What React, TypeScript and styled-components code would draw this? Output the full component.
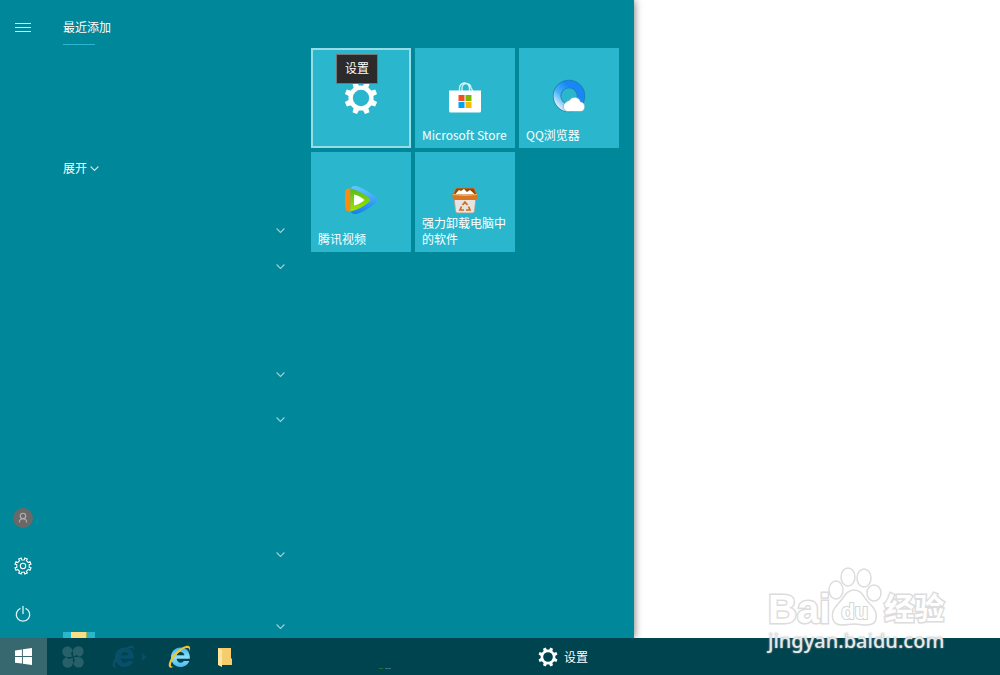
import React from "react";
import styled, { createGlobalStyle, css } from "styled-components";

const teal = "#008799";
const tileColor = "#2ab7cd";
const barColor = "#00444f";

const GlobalStyle = createGlobalStyle`
  * { box-sizing: border-box; }
  body {
    margin: 0;
    background: #fff;
    color: #fff;
    font: 12px/16px "Noto Sans CJK SC", "Open Sans", sans-serif;
  }
  button { font: inherit; color: inherit; border: 0; padding: 0; background: none; cursor: pointer; }
  svg { display: block; flex: none; overflow: visible; }
`;

const Desktop = styled.div`
  min-height: 100vh;
  display: flex;
  flex-direction: column;
  position: relative;
`;

const Workspace = styled.main`
  flex: 1 1 0;
  min-height: 0;
  display: flex;
  overflow: hidden;
`;

const StartMenu = styled.section`
  flex: 0 1 634px;
  display: flex;
  background: ${teal};
  box-shadow: 0 0 8px rgba(0, 0, 0, 0.6);
`;

const Rail = styled.nav`
  flex: none;
  width: 46px;
  display: flex;
  flex-direction: column;
  justify-content: space-between;
  padding-top: 3px;
`;

const RailGroup = styled.div`
  display: flex;
  flex-direction: column;
`;

const RailButton = styled.button`
  height: 48px;
  display: grid;
  place-items: center;
`;

const AppList = styled.div`
  flex: none;
  width: 248px;
  padding-left: 17px;
  display: flex;
  flex-direction: column;
  overflow: hidden;
`;

const ListHeading = styled.h2`
  margin: 0;
  height: 45px;
  padding-top: 19px;
  font-size: 12px;
  line-height: 16px;
  font-weight: 400;
  display: flex;
  flex-direction: column;
  justify-content: space-between;
  &::after {
    content: "";
    width: 32px;
    height: 1px;
    background: ${tileColor};
  }
`;

const ExpandButton = styled.button`
  align-self: flex-start;
  margin-top: 105px;
  height: 36px;
  display: flex;
  align-items: center;
  gap: 3px;
`;

const Groups = styled.div`
  flex: 1 1 0;
  min-height: 0;
  overflow: hidden;
  padding-top: 26px;
`;

const Group = styled.div<{ $gap: number }>`
  margin-bottom: ${(p) => p.$gap}px;
`;

const AppRow = styled.div`
  height: 36px;
  display: flex;
  align-items: center;
  justify-content: flex-end;
  padding-right: 9px;
`;

const RowToggle = styled.button`
  display: grid;
  place-items: center;
`;

const NextApp = styled.div`
  width: 32px;
  height: 6px;
  display: flex;
  justify-content: center;
  background: ${tileColor};
`;

const Tiles = styled.div`
  display: grid;
  grid-template-columns: repeat(3, 100px);
  grid-auto-rows: 100px;
  gap: 4px;
  padding: 48px 0 0 17px;
  align-content: start;
`;

const TileButton = styled.button<{ $selected?: boolean }>`
  position: relative;
  background: ${tileColor};
  text-align: left;
  ${(p) => p.$selected && css`box-shadow: inset 0 0 0 2px #98dce7;`}
`;

const TileIcon = styled.span<{ $raised?: boolean }>`
  position: absolute;
  inset: 0;
  padding-bottom: ${(p) => (p.$raised ? 4 : 0)}px;
  display: grid;
  place-items: center;
`;

const TileLabel = styled.span`
  position: absolute;
  left: 7px;
  right: 4px;
  bottom: 5px;
`;

const Tooltip = styled.span`
  position: absolute;
  left: 25px;
  top: 6px;
  padding: 5px 8px 7px;
  border: 1px solid #767676;
  background: #2b2b2b;
`;

const Taskbar = styled.footer`
  flex: none;
  height: 37px;
  display: flex;
  background: ${barColor};
`;

const TaskButton = styled.button<{ $width: number; $active?: boolean }>`
  width: ${(p) => p.$width}px;
  display: grid;
  place-items: center;
  background: ${(p) => (p.$active ? "#38686f" : "transparent")};
`;

const TaskGap = styled.div`
  width: 283px;
  display: flex;
  align-items: flex-end;
  justify-content: center;
  padding: 0 16px 5px 0;
`;

const RunningTask = styled.button`
  display: flex;
  align-items: center;
  gap: 6px;
  padding: 0 4px;
`;

const Watermark = styled.div`
  position: absolute;
  right: 52px;
  bottom: 21px;
  width: 180px;
  color: #fff;
  pointer-events: none;
`;

const WatermarkLogo = styled.div`
  display: flex;
  align-items: flex-end;
  height: 60px;
`;

const LogoText = styled.span<{ $size: number }>`
  font: 700 ${(p) => p.$size}px/38px "Liberation Sans", "Noto Sans CJK SC", sans-serif;
  -webkit-text-stroke: 3px #dcdcdc;
  paint-order: stroke fill;
`;

const Paw = styled.span`
  position: relative;
  width: 54px;
  height: 60px;
`;

const PawText = styled.span`
  position: absolute;
  left: 11px;
  bottom: 4px;
  font: 700 22px/24px "Liberation Sans", sans-serif;
  -webkit-text-stroke: 2px #d4d4d4;
  paint-order: stroke fill;
`;

const WatermarkUrl = styled.div`
  font: 500 20px/26px "Noto Sans", sans-serif;
  color: #e4eaea;
  text-shadow: 0 0 2px #999;
`;

const gearTeeth = [0, 45, 90, 135, 180, 225, 270, 315];

function Gear({ size }: { size: number }) {
  return (
    <svg width={size} height={size} viewBox="0 0 34 34" fill="none">
      <circle cx="17" cy="17" r="10.4" stroke="#fff" strokeWidth="4.4" />
      {gearTeeth.map((a) => (
        <path key={a} d="M14 6 14.6 .6h4.8L20 6z" fill="#fff" transform={`rotate(${a + 22.5} 17 17)`} />
      ))}
    </svg>
  );
}

function OutlineGear() {
  return (
    <svg width="18" height="18" viewBox="0 0 18 18" fill="none" stroke="#fff" strokeWidth="1.1">
      <circle cx="9" cy="9" r="2.7" />
      <path d="M7.2 1 7.6 2.8 8.4 3h1.2l.8-.2L10.8 1l2.5 1-.9 1.7 1.9 1.9L16 4.7l1 2.5-1.8.4v2.8l1.8.4-1 2.5-1.7-.9-1.9 1.9.9 1.7-2.5 1-.4-1.8H7.6L7.2 17l-2.5-1 .9-1.7-1.9-1.9-1.7.9-1-2.5 1.8-.4V7.6L1 7.2l1-2.5 1.7.9 1.9-1.9L4.7 2z" />
    </svg>
  );
}

function Chevron({ dim }: { dim?: boolean }) {
  return (
    <svg width="9" height="9" viewBox="0 0 9 9" fill="none" stroke={dim ? "#9ed3da" : "#c8e6ea"} strokeWidth="1.1">
      <path d="M.6 2.5 4.5 6.4 8.4 2.5" />
    </svg>
  );
}

function StoreIcon() {
  return (
    <svg width="32" height="32" viewBox="0 0 32 32">
      <path d="M10.5 9V6a5 5 0 0 1 10 0v3M13 9V6a4.5 4.5 0 0 1 9 0 6 6 0 0 1 1.5 3" fill="none" stroke="#dff5f8" strokeWidth="1.3" />
      <path d="M0 8.5h32V29a1.5 1.5 0 0 1-1.5 1.5h-29A1.5 1.5 0 0 1 0 29z" fill="#fff" />
      <path d="M9.500 13h6v6h-6z" fill="#f15022" />
      <path d="M16.500 13h6v6h-6z" fill="#7db900" />
      <path d="M9.500 20h6v6h-6z" fill="#00a3ee" />
      <path d="M16.500 20h6v6h-6z" fill="#ffb800" />
    </svg>
  );
}

function QQIcon() {
  return (
    <svg width="34" height="34" viewBox="0 0 34 34">
      <defs>
        <linearGradient id="qq" x1="1" y1="0" x2="0" y2="1">
          <stop offset="0.3" stopColor="#1687f5" />
          <stop offset="0.65" stopColor="#47b1f8" />
          <stop offset="1" stopColor="#f2fbff" />
        </linearGradient>
      </defs>
      <circle cx="17" cy="17" r="12" fill="none" stroke="#207eae" strokeWidth="8.4" />
      <circle cx="17" cy="17" r="12" fill="none" stroke="url(#qq)" strokeWidth="6.8" />
      <path d="M15 32.5a5 5 0 0 1-.5-9.5 4 4 0 0 1 3-1.800 6 6 0 0 1 11 1.500 5 5 0 0 1 .5 9.800z" fill="#fff" stroke="#438eb4" strokeWidth=".5" />
    </svg>
  );
}

function VideoIcon() {
  return (
    <svg width="34" height="30" viewBox="0 0 34 30">
      <defs>
        <linearGradient id="vb" x1="0" y1="0" x2="0" y2="1">
          <stop offset="0" stopColor="#62c8ff" />
          <stop offset="1" stopColor="#147ff0" />
        </linearGradient>
        <linearGradient id="vg" x1="0" y1="0" x2="0" y2="1">
          <stop offset="0" stopColor="#57bd15" />
          <stop offset="1" stopColor="#a1e500" />
        </linearGradient>
      </defs>
      <path d="M7 3C8 .8 11 .5 14 1.5c6 2.5 12 6 17.500 10.500q3.500 3 0 6C26 22.500 20 26.500 14 28.500c-3 1-6 .7-7-1.500z" fill="url(#vb)" />
      <path d="M6.500 3.500C3 3 1.500 4.500 1.200 7.500c-.5 5-.5 10 0 15 .3 3 1.800 4.500 5.300 4z" fill="#ff8b0c" />
      <path d="M6.500 3.500c7 1.700 13 5 18.500 9.500q2.500 2 0 4C19.500 21.500 13.500 25 6.500 26.500z" fill="url(#vg)" />
      <path d="M10 9.500c4 .8 7 2.500 10.500 5.500-3.500 3-6.500 4.700-10.500 5.500z" fill="#fff" />
    </svg>
  );
}

function BinIcon() {
  return (
    <svg width="30" height="30" viewBox="0 0 30 30">
      <path d="M4 12h22l-1.500 14q0 2-2 2h-15q-2 0-2-2z" fill="#e5e4e2" stroke="#a99b91" strokeWidth=".8" />
      <path d="M6 3h18l3 7H3z" fill="#8c4a13" stroke="#d27a24" />
      <path d="M5 9.500 9 5l2 1 3-2 3 3 3-2 5 4.500z" fill="#fff" />
      <path d="M2.500 9q12.500 2 25 0v4l-1.500 2H4l-1.500-2z" fill="#da771f" />
      <path d="M3 9.500q12 2 24 0" fill="none" stroke="#f6b666" />
      <path d="m12.500 20 2.500-3 2.500 3m1 1.500 1.500 3.500h-4m-2 0h-4l1.500-3.500" fill="none" stroke="#cf6c1c" strokeWidth="1.700" />
    </svg>
  );
}

function IEIcon({ dim }: { dim?: boolean }) {
  return (
    <svg width="24" height="24" viewBox="0 0 24 24">
      <defs>
        <linearGradient id="ie" x1="0" y1="0" x2="0" y2="1">
          <stop offset="0" stopColor="#3fb2ec" />
          <stop offset=".5" stopColor="#8ce0fb" />
          <stop offset="1" stopColor="#49b8ee" />
        </linearGradient>
      </defs>
      <path
        d="M12.500 2.500c-5.500 0-9.500 4.300-9.500 9.700s4 9.800 9.500 9.800c4 0 7.500-2.200 8.800-6h-5.500c-.7 1.200-1.800 1.700-3.100 1.700-2.300 0-3.900-1.500-4-3.900h13.100C22.300 7 18.500 2.500 12.500 2.500zM8.800 10.300c.3-2 1.800-3.400 3.900-3.400s3.500 1.400 3.700 3.400z"
        fill={dim ? "#074f6b" : "url(#ie)"}
      />
      <path
        d="M5.500 21.800C1 24.500-.8 21 2.300 14.800 5.500 8.500 12 2.300 18 .9c4-.9 5 1.600 3.400 5.600.4-3-.6-4-3-3.500C13.500 4 7.500 9.700 4.600 15c-2.400 4.300-2.200 7.300.9 6.800z"
        fill={dim ? "#0b5166" : "#f5c52c"}
      />
    </svg>
  );
}

function CloverIcon() {
  return (
    <svg width="22" height="22" viewBox="0 0 22 22" fill="#286069">
      {[0, 90, 180, 270].map((a) => (
        <path key={a} d="M10.700 10.200C9 11 7.500 11 5.500 11A5.300 5.300 0 1 1 10.800 5.200C8.700 6 8.500 8.500 10.700 10.200z" transform={`rotate(${a} 11 11)`} />
      ))}
    </svg>
  );
}

function DimArrow() {
  return (
    <svg width="6" height="8" viewBox="0 0 6 8"><path d="M0 0 5 4 0 8z" fill="#074e67" /></svg>
  );
}

const DimApp = styled.span`
  display: flex;
  align-items: center;
  gap: 6px;
`;

const tiles = [
  { name: "设置", icon: <Gear size={34} />, selected: true },
  { name: "Microsoft Store", icon: <StoreIcon /> },
  { name: "QQ浏览器", icon: <QQIcon />, raised: true },
  { name: "腾讯视频", icon: <VideoIcon />, raised: true },
  { name: "强力卸载电脑中的软件", icon: <BinIcon />, raised: true },
];

const groups = [
  { gap: 9, rows: [true, true, false, false, true] },
  { gap: 27, rows: [true, false, false] },
  { gap: 0, rows: [true, false, true] },
];

export default function App() {
  return (
    <Desktop>
      <GlobalStyle />
      <Workspace>
        <StartMenu aria-label="开始">
          <Rail>
            <RailButton aria-label="菜单">
              <svg width="16" height="11" viewBox="0 0 16 11" stroke="#d5edf0"><path d="M0 1.500h16M0 5.500h16M0 9.500h16" /></svg>
            </RailButton>
            <RailGroup>
              <RailButton aria-label="用户">
                <svg width="20" height="20" viewBox="0 0 20 20" fill="none" stroke="#b9b0ae" strokeWidth="1.1">
                  <circle cx="10" cy="10" r="10" fill="#696969" stroke="none" />
                  <circle cx="10" cy="8" r="2.7" /><path d="M6.300 14.500c.2-5 7.200-5 7.400 0" />
                </svg>
              </RailButton>
              <RailButton aria-label="设置"><OutlineGear /></RailButton>
              <RailButton aria-label="电源">
                <svg width="16" height="18" viewBox="0 0 16 18" fill="none" stroke="#e0f2f4" strokeWidth="1.3">
                  <path d="M8 1v8M5.500 3.300a6.700 6.700 0 1 0 5 0" />
                </svg>
              </RailButton>
            </RailGroup>
          </Rail>
          <AppList>
            <ListHeading>最近添加</ListHeading>
            <ExpandButton>展开<Chevron /></ExpandButton>
            <Groups>
              {groups.map((g, i) => (
                <Group key={i} $gap={g.gap}>
                  {g.rows.map((folder, j) => (
                    <AppRow key={j}>{folder && <RowToggle aria-label="展开文件夹"><Chevron dim /></RowToggle>}</AppRow>
                  ))}
                </Group>
              ))}
            </Groups>
            <NextApp>
              <svg width="16" height="6" viewBox="0 0 16 6"><path d="M0 0h15l1 1v5H0z" fill="#fbdd85" /><path d="M15 0h1v6h-1z" fill="#a5b85e" /></svg>
            </NextApp>
          </AppList>
          <Tiles>
            {tiles.map((t) => (
              <TileButton key={t.name} $selected={t.selected}>
                <TileIcon $raised={t.raised}>{t.icon}</TileIcon>
                {t.selected ? <Tooltip role="tooltip">{t.name}</Tooltip> : <TileLabel>{t.name}</TileLabel>}
              </TileButton>
            ))}
          </Tiles>
        </StartMenu>
      </Workspace>
      <Taskbar>
        <TaskButton $width={47} $active aria-label="开始">
          <svg width="17" height="17" viewBox="0 0 16 16" fill="#fff"><path d="M0 2.300 6.500 1.400v6.200H0zM7.400 1.200 16 0v7.600H7.400zM0 8.500h6.500v6.200L0 13.800zM7.400 8.500H16V16l-8.600-1.200z" /></svg>
        </TaskButton>
        <TaskButton $width={52} aria-label="浏览器"><CloverIcon /></TaskButton>
        <TaskButton $width={62} aria-label="Edge"><DimApp><IEIcon dim /><DimArrow /></DimApp></TaskButton>
        <TaskButton $width={38} aria-label="Internet Explorer"><IEIcon /></TaskButton>
        <TaskButton $width={52} aria-label="文件资源管理器">
          <svg width="14" height="20" viewBox="0 0 14 20"><path d="M0 1h13v10l1 1v6H1z" fill="#f6cd6d" /><path d="M0 1 4 3v17l-4-2z" fill="#ffe5a0" /></svg>
        </TaskButton>
        <TaskGap>
          <svg width="12" height="3" viewBox="0 0 12 3"><path d="M0 1h4v1H0z" fill="#167536" /><path d="M6 1h6v1H6z" fill="#3c7277" /></svg>
        </TaskGap>
        <RunningTask><Gear size={20} />设置</RunningTask>
      </Taskbar>
      <Watermark>
        <WatermarkLogo>
          <LogoText $size={40}>Bai</LogoText>
          <Paw>
            <svg width="54" height="60" viewBox="0 0 54 60" fill="#fff" stroke="#dcdcdc" strokeWidth="1.5">
              <ellipse cx="6" cy="22" rx="7" ry="9" /><ellipse cx="18" cy="9" rx="7" ry="9" />
              <ellipse cx="34" cy="10" rx="7" ry="9" /><ellipse cx="44" cy="25" rx="7" ry="8" />
              <path d="M24 22c8 0 10 8 15 13 12 11 8 22-2 22-6 0-8-1-13-1s-7 1-12 1c-11 0-13-12-4-21 6-6 8-14 16-14z" />
            </svg>
            <PawText>du</PawText>
          </Paw>
          <LogoText $size={30}>经验</LogoText>
        </WatermarkLogo>
        <WatermarkUrl>jingyan.baidu.com</WatermarkUrl>
      </Watermark>
    </Desktop>
  );
}
